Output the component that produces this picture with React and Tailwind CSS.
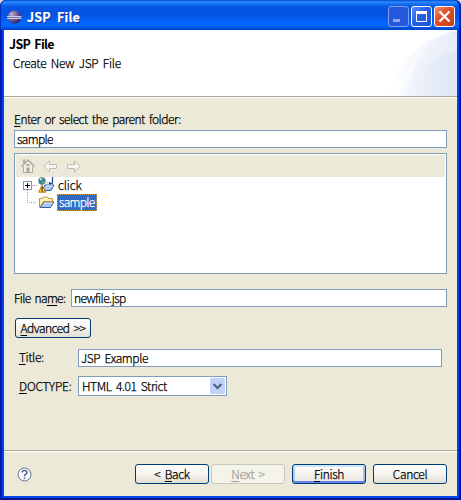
import React from "react";

const U = ({ children }) => (
  <span className="underline decoration-1 underline-offset-[2px] [text-decoration-skip-ink:none]">{children}</span>
);

function Button({ children, className = "", tone = "normal" }) {
  const tones = {
    normal: "border-[#003c74] bg-linear-to-b from-white via-[#f4f3ee] to-[#e2dfd4] text-black",
    primary:
      "border-[#003c74] bg-linear-to-b from-white via-[#f4f3ee] to-[#e8e5dc] text-black shadow-[inset_0_2px_0_#cee7ff,inset_0_-2px_0_#6982ee,inset_2px_0_0_#b3caf5,inset_-2px_0_0_#a3bbf2]",
    disabled: "border-[#c9c7ba] bg-[#f5f4ea] text-[#a1a192]",
  };
  return (
    <button
      className={`flex h-5 shrink-0 items-center justify-center whitespace-pre rounded-[3px] border pb-px [word-spacing:2px] ${tones[tone]} ${className}`}
    >
      <span>{children}</span>
    </button>
  );
}

function EclipseIcon() {
  return (
    <svg width="15" height="14" viewBox="0 0 15 14" className="shrink-0">
      <defs>
        <radialGradient id="ball" cx="30%" cy="30%" r="80%">
          <stop offset="0" stopColor="#c3b4cc" />
          <stop offset="0.45" stopColor="#75649a" />
          <stop offset="1" stopColor="#2b1d5c" />
        </radialGradient>
      </defs>
      <circle cx="7.500" cy="7" r="6.600" fill="url(#ball)" />
      <path d="M0 6.500h14.500M0 8.500h14.500" stroke="#c9cbe8" />
      <path d="M1 7.500h13" stroke="#7a78b4" />
    </svg>
  );
}

function TitleBar() {
  return (
    <header className="flex h-[30px] shrink-0 items-center rounded-t-[6px] bg-[linear-gradient(180deg,#0048cd_0,#2f8cff_2px,#1470f4_4px,#0455e0_7px,#0353e0_14px,#0264fa_22px,#0266ff_26px,#0050dc_28px,#0042c4_30px)] pl-[7px] pr-[6px] pt-[3px] shadow-[inset_1px_0_0_#0030c4,inset_-2px_0_0_#0024b0]">
      <EclipseIcon />
      <h1 className="ml-[5px] whitespace-pre text-[12.5px] leading-4 font-bold tracking-[0.2px] text-white [text-shadow:1px_1px_0_#0a1883] [word-spacing:3px]">JSP File</h1>
      <div className="ml-auto flex gap-[2px]">
        <svg width="21" height="21" viewBox="0 0 21 21">
          <rect x=".5" y=".5" width="20" height="20" rx="2.500" fill="#2457dc" stroke="#7d9df0" />
          <path d="M5 14.500h7" stroke="#8fa6ee" strokeWidth="3" />
        </svg>
        <svg width="21" height="21" viewBox="0 0 21 21">
          <defs>
            <linearGradient id="blue" x1="0" y1="0" x2="1" y2="1">
              <stop offset="0" stopColor="#5a8cf4" />
              <stop offset=".45" stopColor="#2760e6" />
              <stop offset="1" stopColor="#1a50d8" />
            </linearGradient>
          </defs>
          <rect x=".5" y=".5" width="20" height="20" rx="2.500" fill="url(#blue)" stroke="#fff" />
          <path d="M5.500 6v9.500h10V6" fill="none" stroke="#fff" />
          <path d="M5 6.500h11" stroke="#fff" strokeWidth="3" />
        </svg>
        <svg width="21" height="21" viewBox="0 0 21 21">
          <defs>
            <linearGradient id="red" x1="0" y1="0" x2="1" y2="1">
              <stop offset="0" stopColor="#f09a7c" />
              <stop offset=".4" stopColor="#e2512a" />
              <stop offset="1" stopColor="#c63a10" />
            </linearGradient>
          </defs>
          <rect x=".5" y=".5" width="20" height="20" rx="2.500" fill="url(#red)" stroke="#fff" />
          <path d="M5.500 5.500l10 10M15.500 5.500l-10 10" stroke="#fff" strokeWidth="2.300" />
        </svg>
      </div>
    </header>
  );
}

function Banner() {
  return (
    <section className="relative h-[68px] shrink-0 border-b border-white bg-white">
      <svg className="absolute right-0 top-0" width="75" height="66" viewBox="0 0 75 66">
        <defs>
          <linearGradient id="outer">
            <stop offset="0" stopColor="#fff" />
            <stop offset=".5" stopColor="#f6f8fd" />
            <stop offset="1" stopColor="#e8edf9" />
          </linearGradient>
          <linearGradient id="inner">
            <stop offset="0" stopColor="#f4f7fd" />
            <stop offset="1" stopColor="#dce3f5" />
          </linearGradient>
        </defs>
        <path d="M3 66C15 35 40 6 75 1V66z" fill="url(#outer)" />
        <path d="M24 66C28 36 45 10 75 1V66z" fill="#e6ebf8" opacity=".4" />
        <path d="M18 66C30 44 50 24 75 21V66z" fill="url(#inner)" opacity=".8" />
      </svg>
      <div className="relative h-[67px] border-b border-[#aca899] pt-[6px]">
        <h2 className="ml-[5px] h-4 whitespace-pre text-[12.5px] leading-4 font-bold tracking-[-0.7px] [-webkit-text-stroke:0]">JSP File</h2>
        <p className="ml-[9px] mt-[3px] h-4 whitespace-pre leading-4 tracking-[-0.25px]">Create New JSP File</p>
      </div>
    </section>
  );
}

function HomeIcon() {
  return (
    <svg width="14" height="16" viewBox="0 0 14 16" fill="none" stroke="#aaa799">
      <path d="M2.500 8v6.500h9V8" fill="#f2f0e6" />
      <path d="M.5 8.500L7 2l6.500 6.500" fill="#f2f0e6" strokeWidth="1.500" />
      <path d="M3 5V1.500" strokeWidth="2" />
      <path d="M7 9.500v5M7 6v2" strokeWidth="3" />
    </svg>
  );
}

function ArrowIcon({ flip }) {
  return (
    <svg width="15" height="13" viewBox="0 0 15 13" className={flip ? "-scale-x-100" : ""}>
      <path d="M.7 6.500L6.500 1v3.500H13.500v4H6.500V12z" fill="#f5f4ef" stroke="#bebcb2" strokeLinejoin="round" />
    </svg>
  );
}

function FolderShape() {
  return (
    <>
      <path d="M1.500 11V2.500h3l1-1.500h4l1 1.500h4V6" fill="#fff0b5" stroke="#c4913a" />
      <path d="M2 11.500L6 6h10l-3.500 5.500z" fill="#a9c9f1" stroke="#2f5cae" />
      <path d="M2 11L5.500 5.500H15" fill="none" stroke="#b98c3c" />
      <path d="M6 7h8.500" stroke="#e6f2ff" />
    </>
  );
}

function ProjectIcon() {
  return (
    <svg width="17" height="17" viewBox="0 0 17 17" className="shrink-0">
      <path d="M4 13.500L7 8h9l-3 5.500z" fill="#a9c9f1" stroke="#2f5cae" />
      <path d="M8 9h7" stroke="#e6f2ff" />
      <path d="M8 6l2-2v3z" fill="#f6cf7c" />
      <path d="M14.500 0v5.500q0 1-1 1h-2V5" fill="none" stroke="#174a8c" strokeWidth="1.300" />
      <circle cx="4" cy="4" r="3.700" fill="#3e7fae" />
      <path d="M1.500 2Q3.500.5 5 1.500L4 3.500 2 4zM4 5l3-1v2L5 7z" fill="#64ae63" />
      <path d="M2 1.500h1.500v1.500H2z" fill="#d7efe5" />
      <path d="M4 8L.7 15.200h7z" fill="#f9bd49" stroke="#c37b12" strokeLinejoin="round" />
      <path d="M4.200 10v2.500M4.200 13.300v1.200" stroke="#3a2a10" strokeWidth="1.200" />
    </svg>
  );
}

function FolderTree() {
  return (
    <div className="mt-[5px] h-[121px] shrink-0 border border-[#7f9db9] bg-white p-px">
      <div className="flex h-[22px] items-center bg-[#ece9d8] pl-[5px]">
        <HomeIcon />
        <span className="ml-[8px] flex"><ArrowIcon /></span>
        <span className="ml-[8px] flex"><ArrowIcon flip /></span>
      </div>
      <div className="flex h-[17px] items-center">
        <svg width="15" height="17" viewBox="0 0 15 17" className="ml-[7px] shrink-0">
          <path d="M4.500 13v4M9 8.500h6" stroke="#aca899" strokeDasharray="1 1" />
          <rect x=".5" y="4.500" width="8" height="8" fill="#fff" stroke="#7898b5" />
          <path d="M2 8.500h5M4.500 6v5" stroke="#000" />
        </svg>
        <ProjectIcon />
        <span className="ml-[3px] h-[17px] leading-4 tracking-[-0.2px]">click</span>
      </div>
      <div className="flex h-[17px] items-center">
        <svg width="15" height="17" viewBox="0 0 15 17" className="ml-[7px] shrink-0">
          <path d="M4.500 0v8.500H14" fill="none" stroke="#aca899" strokeDasharray="1 1" />
        </svg>
        <svg width="17" height="13" viewBox="0 0 17 13" className="shrink-0"><FolderShape /></svg>
        <span className="ml-[2px] h-[17px] w-10 border border-dotted border-[#d8a63c] bg-[#316ac5] pl-px leading-[14px] tracking-[-0.7px] text-white">sample</span>
      </div>
    </div>
  );
}

const field = "h-[18px] min-w-0 border border-[#7f9db9] bg-white pl-[2px] leading-4 whitespace-pre";

export default function App() {
  return (
    <div className="h-[500px] w-[461px] overflow-hidden bg-[#d9d9df] font-['Noto_Sans_CJK_JP',sans-serif] text-[12px] leading-4 font-light tracking-[-0.5px] text-black [word-spacing:2px] [-webkit-text-stroke:0.25px]">
      <div className="flex h-full flex-col rounded-t-[7px] bg-[#0046e8] shadow-[inset_2px_0_0_#0016b4,inset_-2px_0_0_#0010a0,inset_0_-2px_0_#00138c]">
        <TitleBar />
        <div className="mx-1 mb-1 flex min-h-0 flex-1 flex-col bg-[#ece9d8]">
          <Banner />
          <main className="flex flex-1 flex-col pl-[10px] pr-[10px] pt-[13px]">
            <label className="h-4 whitespace-pre"><U>E</U>nter or select the parent folder:</label>
            <div className={`mt-[3px] shrink-0 tracking-[-0.65px] ${field}`}>sample</div>
            <FolderTree />
            <div className="mt-[15px] flex h-[18px]">
              <label className="w-[57px] shrink-0 whitespace-pre pt-px tracking-[-0.65px]">File na<U>m</U>e:</label>
              <div className={`flex-1 tracking-[-0.6px] ${field}`}>newfile.jsp</div>
            </div>
            <Button className="ml-px mt-[11px] w-[76px]"><U>A</U>dvanced &gt;&gt;</Button>
            <div className="ml-[5px] mr-[5px] mt-[11px] flex h-[18px]">
              <label className="w-[59px] shrink-0 whitespace-pre tracking-[-0.4px]"><U>T</U>itle:</label>
              <div className={`flex-1 tracking-[-0.4px] ${field}`}>JSP Example</div>
            </div>
            <div className="ml-[5px] mt-[9px] flex h-5">
              <label className="w-[59px] shrink-0 whitespace-pre pt-[2px] tracking-[-0.2px]"><U>D</U>OCTYPE:</label>
              <div className="flex w-[149px] items-center border border-[#7f9db9] bg-white pl-[3px] pr-px">
                <span className="whitespace-pre tracking-[-0.4px]">HTML 4.01 Strict</span>
                <svg className="ml-auto" width="15" height="16" viewBox="0 0 15 16">
                  <rect width="15" height="16" rx="1.500" fill="#c1d2fb" />
                  <path d="M3.500 6l4 4 4-4" fill="none" stroke="#4d6185" strokeWidth="2.200" />
                </svg>
              </div>
            </div>
          </main>
          <footer className="h-[46px] shrink-0 border-t border-[#aca899]">
            <div className="flex h-[45px] items-start border-t border-white pl-[13px] pr-[10px] pt-[12px]">
              <svg width="15" height="15" viewBox="0 0 15 15" className="mt-[3px]">
                <circle cx="7.500" cy="7.500" r="6.500" fill="#f8fafc" stroke="#64789d" />
                <path d="M5 5.500Q5.300 3.500 7.500 3.500T10 5.500C10 7.200 7.500 7.200 7.500 9.200M7.500 10.500v1.500" fill="none" stroke="#506892" strokeWidth="1.600" />
              </svg>
              <div className="ml-auto flex tracking-[-0.35px]">
                <Button className="w-[74px]">&lt; <U>B</U>ack</Button>
                <Button className="ml-[2px] w-[74px]" tone="disabled"><U>N</U>ext &gt;</Button>
                <Button className="ml-[7px] w-[74px]" tone="primary"><U>F</U>inish</Button>
                <Button className="ml-[7px] w-[74px]">Cancel</Button>
              </div>
            </div>
          </footer>
        </div>
      </div>
    </div>
  );
}
